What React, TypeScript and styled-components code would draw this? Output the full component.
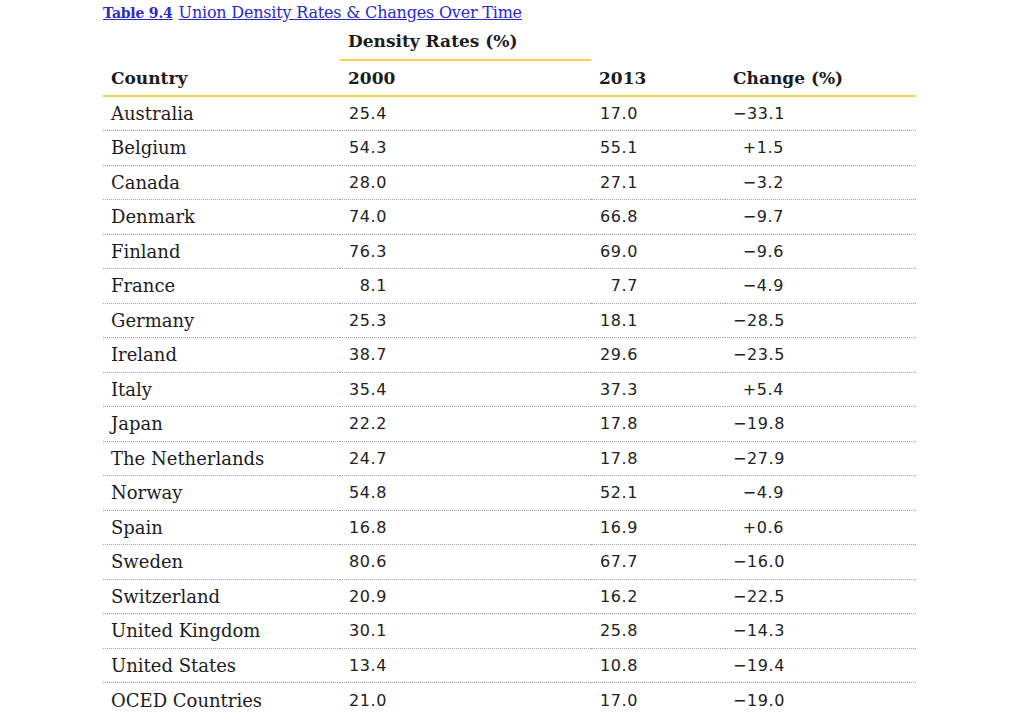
import React from 'react'
import styled, { createGlobalStyle } from 'styled-components'

const GlobalStyle = createGlobalStyle`
  html, body {
    margin: 0;
    padding: 0;
    background: #ffffff;
  }
  body {
    font-family: "DejaVu Serif", "Liberation Serif", serif;
    color: #1c1c1c;
  }
`

const Wrapper = styled.div`
  padding: 3px 108px 0 103px;
  width: 1024px;
  box-sizing: border-box;
`

const Caption = styled.a`
  display: inline-block;
  color: #2a2ac8;
  text-decoration: underline;
  font-size: 16px;
  line-height: 20px;
  letter-spacing: -0.2px;
`

const CaptionLabel = styled.b`
  font-size: 14px;
  margin-right: 6px;
`

const Table = styled.table`
  width: 813px;
  border-collapse: collapse;
  table-layout: fixed;
`

const HeadCell = styled.th<{ $line?: boolean }>`
  text-align: left;
  font-size: 17px;
  font-weight: bold;
  padding: 0 8px;
  height: 36px;
  border-bottom: ${(p) => (p.$line ? '2px solid #f8d34a' : '2px solid transparent')};
`

const HeaderRow = styled.tr`
  border-bottom: 2px solid #f8d34a;
  & > th {
    height: 34px;
    border-bottom: none;
  }
`

const Row = styled.tr`
  height: 34.5px;
  border-bottom: 1px dotted #a0a0a0;
  &:last-child {
    border-bottom: none;
  }
`

const NameCell = styled.td`
  padding: 0 8px;
  font-size: 18px;
  white-space: nowrap;
`

const NumCell = styled.td`
  padding: 0 8px;
  font-family: "DejaVu Sans", "Liberation Sans", sans-serif;
  font-size: 16px;
  letter-spacing: 0.6px;
  color: #222;
`

const Num = styled.span<{ $w: number }>`
  display: inline-block;
  width: ${(p) => p.$w}px;
  text-align: right;
`

const rows: [string, string, string, string][] = [
  ['Australia', '25.4', '17.0', '−33.1'],
  ['Belgium', '54.3', '55.1', '+1.5'],
  ['Canada', '28.0', '27.1', '−3.2'],
  ['Denmark', '74.0', '66.8', '−9.7'],
  ['Finland', '76.3', '69.0', '−9.6'],
  ['France', '8.1', '7.7', '−4.9'],
  ['Germany', '25.3', '18.1', '−28.5'],
  ['Ireland', '38.7', '29.6', '−23.5'],
  ['Italy', '35.4', '37.3', '+5.4'],
  ['Japan', '22.2', '17.8', '−19.8'],
  ['The Netherlands', '24.7', '17.8', '−27.9'],
  ['Norway', '54.8', '52.1', '−4.9'],
  ['Spain', '16.8', '16.9', '+0.6'],
  ['Sweden', '80.6', '67.7', '−16.0'],
  ['Switzerland', '20.9', '16.2', '−22.5'],
  ['United Kingdom', '30.1', '25.8', '−14.3'],
  ['United States', '13.4', '10.8', '−19.4'],
  ['OCED Countries', '21.0', '17.0', '−19.0'],
]

const App = () => {
  return (
    <Wrapper>
      <GlobalStyle />
      <Caption href="#table-9-4">
        <CaptionLabel>Table 9.4</CaptionLabel>Union Density Rates &amp; Changes Over Time
      </Caption>
      <Table>
        <colgroup>
          <col style={{ width: 237 }} />
          <col style={{ width: 251 }} />
          <col style={{ width: 134 }} />
          <col style={{ width: 191 }} />
        </colgroup>
        <thead>
          <tr>
            <HeadCell />
            <HeadCell $line>Density Rates (%)</HeadCell>
            <HeadCell />
            <HeadCell />
          </tr>
          <HeaderRow>
            <HeadCell>Country</HeadCell>
            <HeadCell>2000</HeadCell>
            <HeadCell>2013</HeadCell>
            <HeadCell>Change (%)</HeadCell>
          </HeaderRow>
        </thead>
        <tbody>
          {rows.map(([name, a, b, c]) => (
            <Row key={name}>
              <NameCell>{name}</NameCell>
              <NumCell>
                <Num $w={39}>{a}</Num>
              </NumCell>
              <NumCell>
                <Num $w={39}>{b}</Num>
              </NumCell>
              <NumCell>
                <Num $w={51}>{c}</Num>
              </NumCell>
            </Row>
          ))}
        </tbody>
      </Table>
    </Wrapper>
  )
}

export default App
